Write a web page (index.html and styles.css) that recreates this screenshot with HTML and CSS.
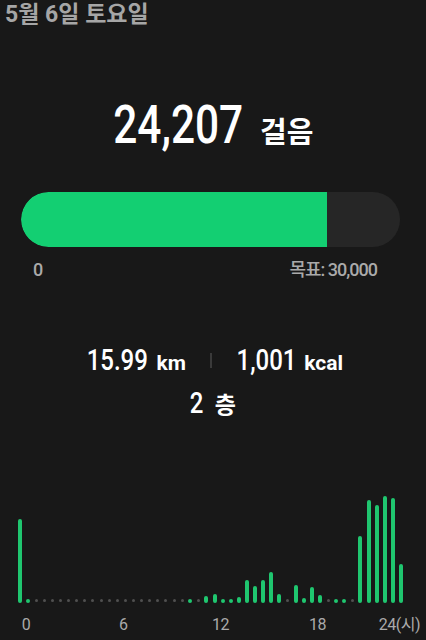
FILE: index.html
```html
<!DOCTYPE html>
<html lang="ko">
<head>
  <meta charset="UTF-8">
  <title>걸음 수</title>
  <meta name="viewport" content="width=device-width, initial-scale=1.0">
  <link rel="stylesheet" href="styles.css">
</head>
<body>

  <!-- Data do dia -->
  <div class="header">5월 6일 토요일</div>

  <div class="steps">
    <span class="num num-big">24,207</span><span class="steps-unit">걸음</span>
  </div>

  <!-- Barra de progresso da meta -->
  <div class="progress">
    <div class="progress-fill" style="width: 80.69%"></div>
  </div>
  <div class="progress-labels">
    <span>0</span>
    <span>목표: 30,000</span>
  </div>

  <div class="stats">
    <span class="stat"><span class="num num-km">15.99</span><small>km</small></span>
    <span class="divider"></span>
    <span class="stat"><span class="num num-kcal">1,001</span><small>kcal</small></span>
  </div>
  <div class="floors"><span class="num num-floor">2</span><small>층</small></div>

  <!-- Grafico por meia hora -->
  <div class="chart">
    <div class="bar" style="height: 84px"></div>
    <div class="bar" style="height: 4px"></div>
    <div class="dot"></div>
    <div class="dot"></div>
    <div class="dot"></div>
    <div class="dot"></div>
    <div class="dot"></div>
    <div class="dot"></div>
    <div class="dot"></div>
    <div class="dot"></div>
    <div class="dot"></div>
    <div class="dot"></div>
    <div class="dot"></div>
    <div class="dot"></div>
    <div class="dot"></div>
    <div class="dot"></div>
    <div class="dot"></div>
    <div class="dot"></div>
    <div class="dot"></div>
    <div class="dot"></div>
    <div class="dot"></div>
    <div class="bar" style="height: 4px"></div>
    <div class="dot"></div>
    <div class="bar" style="height: 7px"></div>
    <div class="bar" style="height: 9px"></div>
    <div class="bar" style="height: 4px"></div>
    <div class="bar" style="height: 4px"></div>
    <div class="bar" style="height: 6px"></div>
    <div class="bar" style="height: 23px"></div>
    <div class="bar" style="height: 17px"></div>
    <div class="bar" style="height: 23px"></div>
    <div class="bar" style="height: 31px"></div>
    <div class="bar" style="height: 9px"></div>
    <div class="dot"></div>
    <div class="bar" style="height: 18px"></div>
    <div class="bar" style="height: 5px"></div>
    <div class="bar" style="height: 16px"></div>
    <div class="bar" style="height: 8px"></div>
    <div class="dot"></div>
    <div class="bar" style="height: 4px"></div>
    <div class="bar" style="height: 4px"></div>
    <div class="dot"></div>
    <div class="bar" style="height: 67px"></div>
    <div class="bar" style="height: 103px"></div>
    <div class="bar" style="height: 98px"></div>
    <div class="bar" style="height: 107px"></div>
    <div class="bar" style="height: 105px"></div>
    <div class="bar" style="height: 39px"></div>
  </div>
  <div class="axis">
    <span><i>0</i></span>
    <span><i>6</i></span>
    <span><i>12</i></span>
    <span class="axis-18"><i>18</i></span>
    <span class="axis-end">24(시)</span>
  </div>

</body>
</html>
```

FILE: styles.css
```css
body {
  font-family: 'Roboto', 'Noto Sans CJK KR', sans-serif;
  background: #181818;
  color: #FFFFFF;
  margin: 0;
  width: 426px;
}

.header {
  font-size: 23px;
  font-weight: bold;
  line-height: 30px;
  color: #A6A6A6;
  padding: 0 5px;
}

/* Numeros estreitos (a fonte original e condensada) */
.num {
  display: inline-block;
  font-weight: 500;
  line-height: 1;
  transform: scaleX(0.8);
}

.num-big { margin: 0 -16px; }
.num-km { margin: 0 -7.5px; }
.num-kcal { margin: 0 -7.3px; }
.num-floor { margin: 0 -1.7px; }

/* Total de passos */
.steps {
  margin-top: 65px;
  font-size: 53px;
  line-height: 60px;
  text-align: center;
}

.steps-unit {
  font-size: 29px;
  font-weight: bold;
  line-height: 1;
  margin-left: 17px;
}

.progress {
  margin: 37px 26px 0 21px;
  height: 55px;
  border-radius: 28px;
  background: #262626;
  overflow: hidden;
}

.progress-fill {
  height: 100%;
  background: #13CF72;
  border-radius: 28px 0 0 28px;
}

.progress-labels {
  display: flex;
  justify-content: space-between;
  margin: 11px 49px 0 33px;
  font-size: 18px;
  font-weight: 500;
  line-height: 24px;
  letter-spacing: -1px;
  color: #AAAAAA;
}

.stats {
  display: flex;
  justify-content: center;
  align-items: center;
  gap: 24px;
  margin: 60px 0 0 4px;
  font-size: 30px;
  line-height: 36px;
}

.stat small,
.floors small {
  font-size: 21px;
  font-weight: bold;
  line-height: 1;
  margin-left: 8px;
}

.divider {
  width: 2px;
  height: 15px;
  background: #3A3A3A;
}

.floors {
  margin-top: 8px;
  font-size: 30px;
  line-height: 34px;
  text-align: center;
}

.floors small {
  font-size: 23px;
  margin-left: 11px;
}

/* Barras de meia hora */
.chart {
  display: grid;
  grid-template-columns: repeat(48, 1fr);
  align-items: end;
  justify-items: center;
  width: 389px;
  height: 115px;
  margin: 68px 0 0 16px;
}

.bar {
  width: 4px;
  border-radius: 2px;
  background: #1FC66F;
}

.dot {
  width: 3px;
  height: 3px;
  margin-bottom: 1px;
  border-radius: 50%;
  background: #505050;
}

.axis {
  display: grid;
  grid-template-columns: repeat(4, 97.2px) 1fr;
  margin: 12px 6px 0 26px;
  font-size: 16px;
  line-height: 20px;
  letter-spacing: -0.5px;
  color: #AAAAAA;
}

.axis i {
  display: inline-block;
  font-style: normal;
  transform: translateX(-50%);
}

.axis-18 {
  grid-area: 1 / 4;
}

.axis-end {
  grid-area: 1 / 4 / 2 / 6;
  justify-self: end;
  white-space: nowrap;
}
```
